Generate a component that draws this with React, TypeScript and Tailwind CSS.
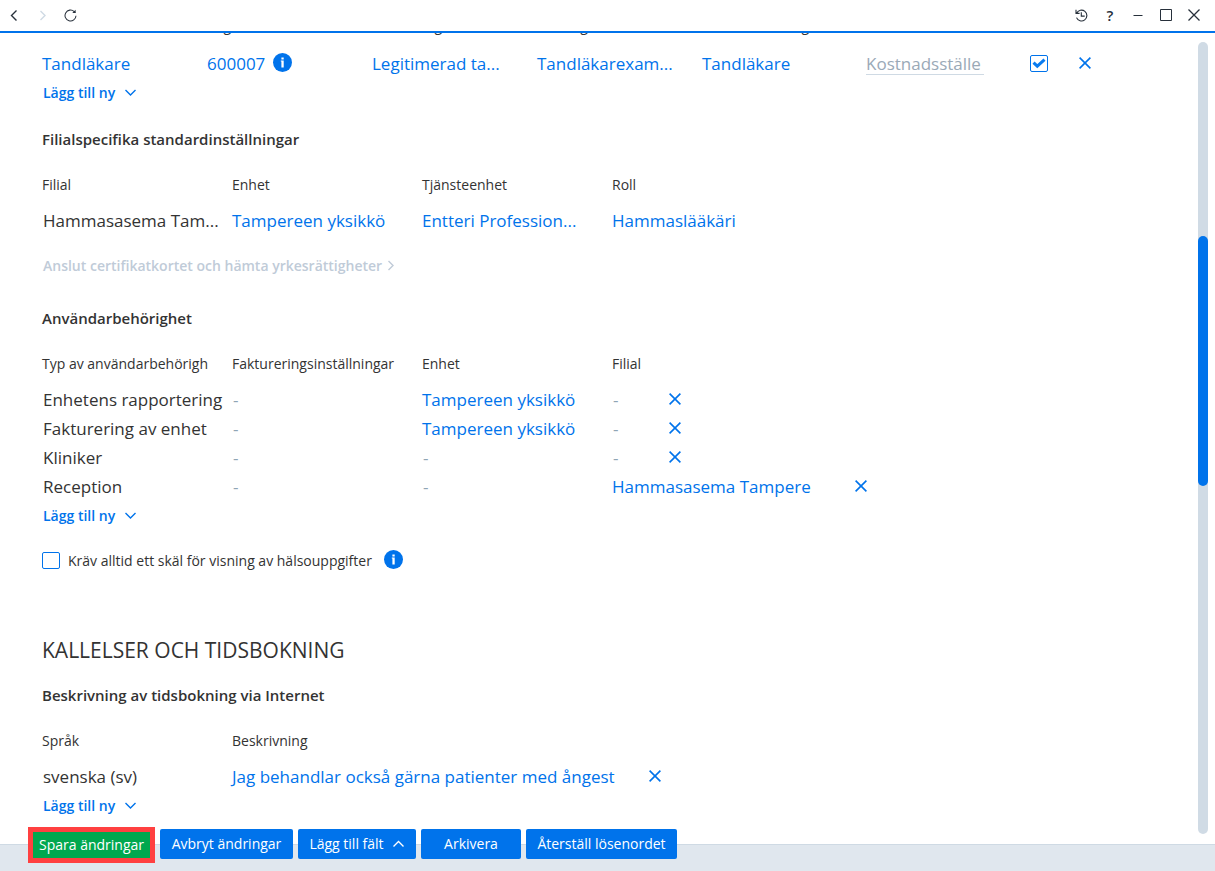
import type { ReactNode } from 'react'

const linkClass = 'text-[17px] leading-[29px] text-[#0073eb] hover:underline'
const textClass = 'pl-px text-[17px] leading-[29px] text-[#333333]'

const permissions = [
  { type: 'Enhetens rapportering', unit: 'Tampereen yksikkö', branch: '' },
  { type: 'Fakturering av enhet', unit: 'Tampereen yksikkö', branch: '' },
  { type: 'Kliniker', unit: '', branch: '' },
  { type: 'Reception', unit: '', branch: 'Hammasasema Tampere' },
]

function Chevron({ dir, className = '' }: { dir: 'up' | 'down' | 'left' | 'right'; className?: string }) {
  const paths = {
    up: 'M1.5 8.5 6.5 3.5 11.5 8.5',
    down: 'M1.5 4 6.5 9 11.5 4',
    left: 'M8.5 1.5 3.5 6.5 8.5 11.5',
    right: 'M4.5 2 9 6.5 4.5 11',
  }
  return (
    <svg width="13" height="13" viewBox="0 0 13 13" fill="none" stroke="currentColor" strokeWidth="1.4" className={className}>
      <path d={paths[dir]} />
    </svg>
  )
}

function RemoveButton() {
  return (
    <button type="button" aria-label="Ta bort" className="block pb-0.5 text-[#0073eb]">
      <svg width="12" height="12" viewBox="0 0 12 12" fill="none" stroke="currentColor" strokeWidth="1.6">
        <path d="M0.6 0.6 11.4 11.4M11.4 0.6 0.6 11.4" />
      </svg>
    </button>
  )
}

function InfoButton() {
  return (
    <button type="button" aria-label="Information" className="pb-0.5">
      <svg width="19" height="19" viewBox="0 0 19 19" className="block">
        <circle cx="9.5" cy="9.5" r="9.5" fill="#0073eb" />
        <path d="M8.4 4.4h2.3v2H8.4zM7.8 7.4h2.9v7H8.4V8.6h-.6z" fill="#fff" />
      </svg>
    </button>
  )
}

function AddButton() {
  return (
    <button type="button" className="flex h-[29px] items-center gap-[9px] pl-px text-sm font-semibold text-[#0073eb]">
      Lägg till ny
      <Chevron dir="down" />
    </button>
  )
}

function Heading({ children, className = '' }: { children: ReactNode; className?: string }) {
  return <h3 className={`text-[15px] leading-[21px] font-semibold text-[#333333] ${className}`}>{children}</h3>
}

function Th({ children, label, className = '' }: { children?: ReactNode; label?: string; className?: string }) {
  return (
    <th
      scope="col"
      aria-label={label}
      className={`h-8 p-0 text-left align-top text-sm leading-[21px] font-normal whitespace-nowrap text-[#333333] ${className}`}
    >
      {children}
    </th>
  )
}

function Value({ children }: { children?: string }) {
  if (!children) {
    return <span className="block w-[13px] pl-px text-[17px] leading-[29px] text-[#8fa5b5]">-</span>
  }
  return <a href="#" className={linkClass}>{children}</a>
}

function TitleBar() {
  return (
    <header className="flex h-[33px] shrink-0 items-center justify-between border-b-2 border-[#0073eb] px-2 pb-px text-[#27303b]">
      <nav className="flex items-center gap-[15px]">
        <button type="button" aria-label="Bakåt"><Chevron dir="left" /></button>
        <button type="button" aria-label="Framåt" className="text-[#cfdae4]" disabled><Chevron dir="right" /></button>
        <button type="button" aria-label="Uppdatera">
          <svg width="13" height="13" viewBox="0 0 14 14" fill="none" stroke="currentColor" strokeWidth="1.1">
            <path d="M12.9 7.2A5.9 5.9 0 1 1 11 2.7l1.2 1.2" />
            <path d="M12.5 0.8v3.6H8.9z" fill="currentColor" stroke="none" />
          </svg>
        </button>
      </nav>
      <div className="flex items-center gap-4 pr-[7px]">
        <button type="button" aria-label="Historik">
          <svg width="13" height="13" viewBox="0 0 13 13" fill="none" stroke="currentColor" strokeWidth="1.1">
            <path d="M1.6 4.2A5.4 5.4 0 1 1 1.5 8.6M1 0.8v3.6h3.6M6.3 3.3v3.8h3.4" />
          </svg>
        </button>
        <button type="button" aria-label="Hjälp" className="w-3 text-center text-[15px] leading-5 font-semibold">?</button>
        <button type="button" aria-label="Minimera">
          <svg width="12" height="12" viewBox="0 0 12 12" stroke="currentColor">
            <path d="M1.5 6.5h9" />
          </svg>
        </button>
        <button type="button" aria-label="Maximera">
          <svg width="12" height="12" viewBox="0 0 12 12" fill="none" stroke="currentColor">
            <path d="M0.5 0.5h11v11h-11z" />
          </svg>
        </button>
        <button type="button" aria-label="Stäng">
          <svg width="12" height="12" viewBox="0 0 12 12" fill="none" stroke="currentColor" strokeWidth="1.3">
            <path d="M0.5 0.5 11.5 11.5M11.5 0.5 0.5 11.5" />
          </svg>
        </button>
      </div>
    </header>
  )
}

function ProfessionTable() {
  return (
    <table className="-mt-[18px] table-fixed border-collapse">
      <thead>
        <tr className="h-[34px]">
          <Th className="w-[165px]" label="Roll" />
          <Th className="w-[165px]">Reg.nr</Th>
          <Th className="w-[165px]">Yrkesrättighet</Th>
          <Th className="w-[165px]">Behörig</Th>
          <Th className="w-[164px]">Yrkesbeteckning</Th>
          <Th className="w-[164px]" label="Kostnadsställe" />
          <Th className="w-[49px]" label="Aktiv" />
          <Th className="w-3" label="Ta bort" />
        </tr>
      </thead>
      <tbody>
        <tr className="h-[29px]">
          <td className="p-0"><Value>Tandläkare</Value></td>
          <td className="p-0">
            <div className="flex items-center gap-2">
              <Value>600007</Value>
              <InfoButton />
            </div>
          </td>
          <td className="p-0"><Value>Legitimerad ta...</Value></td>
          <td className="p-0"><Value>Tandläkarexam...</Value></td>
          <td className="p-0"><Value>Tandläkare</Value></td>
          <td className="p-0">
            <input
              type="text"
              aria-label="Kostnadsställe"
              placeholder="Kostnadsställe"
              className="block h-[23px] w-[118px] border-b border-[#cfdae4] text-[17px] leading-[22px] outline-none placeholder:text-[#9aa9b7]"
            />
          </td>
          <td className="p-0">
            <label className="relative block h-[17px] w-[18px]">
              <input
                type="checkbox"
                aria-label="Aktiv"
                defaultChecked
                className="peer block h-[17px] w-[18px] appearance-none rounded-xs border border-[#0073eb]"
              />
              <svg
                width="18"
                height="17"
                viewBox="0 0 18 17"
                fill="none"
                stroke="#0a7cf0"
                strokeWidth="3"
                className="pointer-events-none absolute inset-0 hidden peer-checked:block"
              >
                <path d="M3.5 7.6 7.3 11.2 14.5 4.7" />
              </svg>
            </label>
          </td>
          <td className="p-0"><RemoveButton /></td>
        </tr>
      </tbody>
    </table>
  )
}

function BranchTable() {
  return (
    <table className="mt-6 table-fixed border-collapse">
      <thead>
        <tr>
          <Th className="w-[190px]">Filial</Th>
          <Th className="w-[190px]">Enhet</Th>
          <Th className="w-[190px]">Tjänsteenhet</Th>
          <Th className="w-[190px]">Roll</Th>
        </tr>
      </thead>
      <tbody>
        <tr className="h-[29px]">
          <td className={`p-0 ${textClass}`}>Hammasasema Tam...</td>
          <td className="p-0"><Value>Tampereen yksikkö</Value></td>
          <td className="p-0"><Value>Entteri Profession...</Value></td>
          <td className="p-0"><Value>Hammaslääkäri</Value></td>
        </tr>
      </tbody>
    </table>
  )
}

function PermissionTable() {
  return (
    <table className="mt-6 table-fixed border-collapse">
      <thead>
        <tr>
          <Th className="w-[190px]">Typ av användarbehörigh</Th>
          <Th className="w-[190px]">Faktureringsinställningar</Th>
          <Th className="w-[190px]">Enhet</Th>
          <Th className="w-[270px]">Filial</Th>
        </tr>
      </thead>
      <tbody>
        {permissions.map((p) => (
          <tr key={p.type} className="h-[29px]">
            <td className={`p-0 whitespace-nowrap ${textClass}`}>{p.type}</td>
            <td className="p-0"><Value /></td>
            <td className="p-0"><Value>{p.unit}</Value></td>
            <td className="p-0">
              <div className="flex items-center gap-11">
                <Value>{p.branch}</Value>
                <RemoveButton />
              </div>
            </td>
          </tr>
        ))}
      </tbody>
    </table>
  )
}

function DescriptionTable() {
  return (
    <table className="mt-6 table-fixed border-collapse">
      <thead>
        <tr>
          <Th className="w-[190px]">Språk</Th>
          <Th>Beskrivning</Th>
        </tr>
      </thead>
      <tbody>
        <tr className="h-[29px]">
          <td className={`p-0 ${textClass}`}>svenska (sv)</td>
          <td className="p-0">
            <div className="flex items-center gap-[34px]">
              <Value>Jag behandlar också gärna patienter med ångest</Value>
              <RemoveButton />
            </div>
          </td>
        </tr>
      </tbody>
    </table>
  )
}

function ActionBar() {
  const blue = 'mt-0.5 h-[30px] rounded-xs bg-[#0073eb] text-sm text-white'
  return (
    <footer className="h-[27px] shrink-0 border-t border-[#cfdae4] bg-[#e0e7ee] pl-7">
      <div className="relative -mt-[18px] flex items-start gap-[5px]">
        <button type="button" className="h-9 w-[127px] border-[5px] border-[#ff4040] bg-[#00a84f] text-sm text-white">
          Spara ändringar
        </button>
        <button type="button" className={`w-[133px] ${blue}`}>Avbryt ändringar</button>
        <button type="button" className={`flex w-[118px] items-center justify-center gap-2 ${blue}`}>
          Lägg till fält
          <Chevron dir="up" />
        </button>
        <button type="button" className={`w-[100px] ${blue}`}>Arkivera</button>
        <button type="button" className={`w-[151px] ${blue}`}>Återställ lösenordet</button>
      </div>
    </footer>
  )
}

export default function App() {
  return (
    <div className="flex h-screen flex-col overflow-hidden bg-white font-['Open_Sans','Noto_Sans',sans-serif]">
      <TitleBar />
      <div className="flex min-h-0 flex-1">
        <main className="min-w-0 flex-1 overflow-hidden pl-[42px]">
          <ProfessionTable />
          <AddButton />

          <Heading className="mt-[22px]">Filialspecifika standardinställningar</Heading>
          <BranchTable />
          <button type="button" disabled className="mt-4 flex h-[29px] items-center gap-0.5 pl-px text-sm font-semibold text-[#c0cbd8]">
            Anslut certifikatkortet och hämta yrkesrättigheter
            <Chevron dir="right" />
          </button>

          <Heading className="mt-7">Användarbehörighet</Heading>
          <PermissionTable />
          <AddButton />
          <div className="mt-4 flex h-[29px] items-center gap-3">
            <label className="flex items-center gap-2 text-sm text-[#333333]">
              <input type="checkbox" className="h-[17px] w-[18px] appearance-none rounded-xs border border-[#0073eb] checked:bg-[#0073eb]" />
              Kräv alltid ett skäl för visning av hälsouppgifter
            </label>
            <InfoButton />
          </div>

          <h2 className="mt-[60px] text-[21px] leading-[30px] text-[#333333]">KALLELSER OCH TIDSBOKNING</h2>
          <Heading className="mt-5">Beskrivning av tidsbokning via Internet</Heading>
          <DescriptionTable />
          <AddButton />
        </main>
        <div className="mt-[9px] mr-[7px] mb-2.5 w-2.5 overflow-hidden rounded-full bg-[#d0dbe5]">
          <div className="mt-[194px] h-[250px] rounded-full bg-[#0073eb]" />
        </div>
      </div>
      <ActionBar />
    </div>
  )
}
